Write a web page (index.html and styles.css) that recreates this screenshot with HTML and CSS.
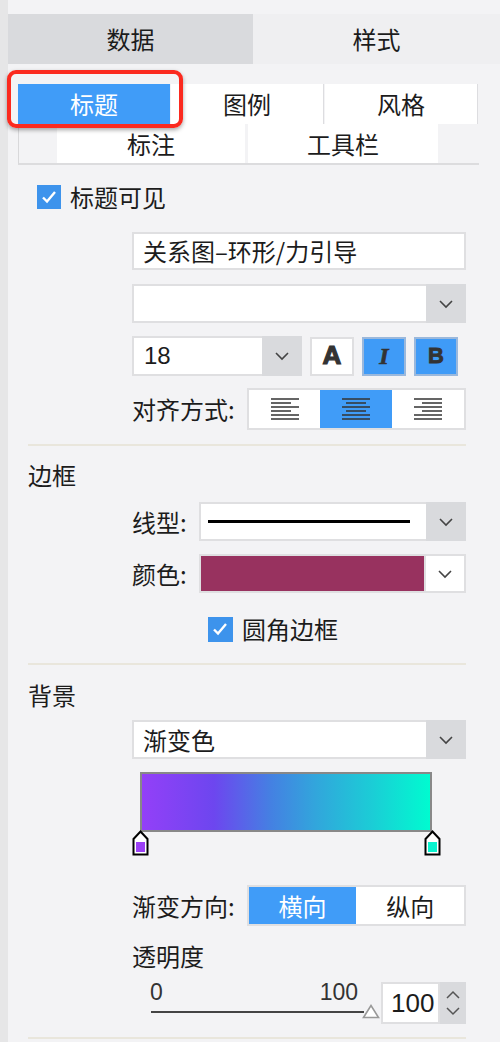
FILE: index.html
```html
<!DOCTYPE html>
<html lang="zh">
<head>
<meta charset="utf-8">
<title>样式面板</title>
<link rel="stylesheet" href="styles.css">
</head>
<body>
<div class="page">
  <div class="strip"></div>
  <div class="panel">
    <div class="main-tabs">
      <div class="mtab mtab-data">数据</div>
      <div class="mtab mtab-style">样式</div>
    </div>

    <div class="subtabs">
      <div class="subrow subrow-1">
        <div class="stab stab-sel">标题</div>
        <div class="stab">图例</div>
        <div class="stab stab-last">风格</div>
      </div>
      <div class="subrow subrow-2">
        <div class="stab">标注</div>
        <div class="stab stab-last">工具栏</div>
      </div>
      <div class="highlight"></div>
    </div>

    <div class="check-row check-title">
      <span class="checkbox"><svg viewBox="0 0 24 24" width="24" height="24"><path d="M6 12.5 L10 16.5 L18 7" fill="none" stroke="#fff" stroke-width="2.4"/></svg></span>
      <span class="check-label">标题可见</span>
    </div>

    <div class="form">
      <div class="field field-text">关系图–环形/力引导</div>
      <div class="field field-select">
        <span class="sel-value"></span>
        <span class="sel-arrow"><svg viewBox="0 0 16 10" width="16" height="10"><path d="M2 2 L8 8 L14 2" fill="none" stroke="#444" stroke-width="1.6"/></svg></span>
      </div>
      <div class="font-row">
        <div class="field field-select field-size">
          <span class="sel-value">18</span>
          <span class="sel-arrow"><svg viewBox="0 0 16 10" width="16" height="10"><path d="M2 2 L8 8 L14 2" fill="none" stroke="#444" stroke-width="1.6"/></svg></span>
        </div>
        <div class="fbtn fbtn-a">A</div>
        <div class="fbtn fbtn-on fbtn-i">I</div>
        <div class="fbtn fbtn-on fbtn-b">B</div>
      </div>
      <div class="label-row label-row-align">
        <span class="row-label">对齐方式:</span>
        <div class="seg seg-align">
          <div class="seg-item">
            <svg viewBox="0 0 28 22" width="28" height="22"><g stroke="#333" stroke-width="1.6"><path d="M0 1H28M0 5H20M0 9H28M0 13H20M0 17H28M0 21H28"/></g></svg>
          </div>
          <div class="seg-item seg-on">
            <svg viewBox="0 0 28 22" width="28" height="22"><g stroke="#333" stroke-width="1.6"><path d="M0 1H28M4 5H24M0 9H28M4 13H24M0 17H28M0 21H28"/></g></svg>
          </div>
          <div class="seg-item">
            <svg viewBox="0 0 28 22" width="28" height="22"><g stroke="#333" stroke-width="1.6"><path d="M0 1H28M8 5H28M0 9H28M8 13H28M0 17H28M0 21H28"/></g></svg>
          </div>
        </div>
      </div>
    </div>

    <div class="sep sep-1"></div>

    <div class="heading heading-border">边框</div>
    <div class="form">
      <div class="label-row label-row-line">
        <span class="row-label">线型:</span>
        <div class="field field-select field-line">
          <span class="sel-value"><span class="line-sample"></span></span>
          <span class="sel-arrow"><svg viewBox="0 0 16 10" width="16" height="10"><path d="M2 2 L8 8 L14 2" fill="none" stroke="#444" stroke-width="1.6"/></svg></span>
        </div>
      </div>
      <div class="label-row label-row-color">
        <span class="row-label">颜色:</span>
        <div class="color-pick">
          <span class="swatch"></span>
          <span class="color-arrow"><svg viewBox="0 0 16 10" width="16" height="10"><path d="M2 2 L8 8 L14 2" fill="none" stroke="#444" stroke-width="1.6"/></svg></span>
        </div>
      </div>
      <div class="check-row check-round">
        <span class="checkbox"><svg viewBox="0 0 24 24" width="24" height="24"><path d="M6 12.5 L10 16.5 L18 7" fill="none" stroke="#fff" stroke-width="2.4"/></svg></span>
        <span class="check-label">圆角边框</span>
      </div>
    </div>

    <div class="sep sep-2"></div>

    <div class="heading heading-bg">背景</div>
    <div class="form">
      <div class="field field-select field-fill">
        <span class="sel-value">渐变色</span>
        <span class="sel-arrow"><svg viewBox="0 0 16 10" width="16" height="10"><path d="M2 2 L8 8 L14 2" fill="none" stroke="#444" stroke-width="1.6"/></svg></span>
      </div>
      <div class="gradient-wrap">
        <div class="gradient"></div>
        <div class="stops">
          <span class="stop" style="left:0%"><svg viewBox="0 0 17 26" width="17" height="26"><path d="M1.5 9 L8.5 1.5 L15.5 9 V24.5 H1.5 Z" fill="#fff" stroke="#000" stroke-width="2"/><rect x="4" y="12" width="9" height="10" fill="#9b3ff6"/></svg></span>
          <span class="stop" style="left:100%"><svg viewBox="0 0 17 26" width="17" height="26"><path d="M1.5 9 L8.5 1.5 L15.5 9 V24.5 H1.5 Z" fill="#fff" stroke="#000" stroke-width="2"/><rect x="4" y="12" width="9" height="10" fill="#08f3cf"/></svg></span>
        </div>
      </div>
      <div class="label-row label-row-dir">
        <span class="row-label">渐变方向:</span>
        <div class="seg seg-dir">
          <div class="seg-item seg-on seg-text">横向</div>
          <div class="seg-item seg-text">纵向</div>
        </div>
      </div>
      <div class="opacity-label">透明度</div>
      <div class="slider-row">
        <div class="slider">
          <div class="slider-ticks"><span>0</span><span>100</span></div>
          <div class="slider-track">
            <span class="thumb"><svg viewBox="0 0 18 15" width="18" height="15"><path d="M1.5 13.5 L9 1.5 L16.5 13.5 Z" fill="#fff" stroke="#999" stroke-width="1.6"/></svg></span>
          </div>
        </div>
        <div class="num-input">
          <span class="num-value">100</span>
          <span class="spinner">
            <svg viewBox="0 0 16 10" width="16" height="10"><path d="M2 8 L8 2 L14 8" fill="none" stroke="#555" stroke-width="1.5"/></svg>
            <svg viewBox="0 0 16 10" width="16" height="10"><path d="M2 2 L8 8 L14 2" fill="none" stroke="#555" stroke-width="1.5"/></svg>
          </span>
        </div>
      </div>
    </div>
    <div class="sep sep-3"></div>
  </div>
</div>
</body>
</html>
```

FILE: styles.css
```css
* { box-sizing: border-box; }

html, body {
  margin: 0;
  padding: 0;
  background: #f3f3f5;
}

body {
  font-family: "Noto Sans CJK SC", "Noto Sans", sans-serif;
  font-size: 24px;
  color: #1c1c1c;
  width: 500px;
  height: 1042px;
  overflow: hidden;
}

.page {
  display: flex;
  height: 1042px;
}

.strip {
  width: 8px;
  background: #e6e6e7;
  flex: none;
}

.panel {
  flex: 1;
  padding-top: 14px;
}

/* main tabs */
.main-tabs {
  display: grid;
  grid-template-columns: 245px 1fr;
  height: 50px;
}

.mtab {
  display: flex;
  align-items: center;
  justify-content: center;
  line-height: 1;
}

.mtab-data { background: #d9dadd; }
.mtab-style { background: #efeff1; }

/* sub tabs */
.subtabs {
  position: relative;
  margin: 20px 0 0 10px;
  width: 461px;
}

.subrow {
  display: flex;
  height: 40px;
}

.subrow-1 { gap: 1px; }

.subrow-1 .stab { width: 153px; }
.subrow-1 .stab-sel { width: 152px; }

.subrow-2 {
  height: 41px;
  border-left: 1px solid #d8d8da;
  border-bottom: 2px solid #dcdcde;
  padding-left: 38px;
  gap: 3px;
}

.subrow-2 .stab { width: 188px; }
.subrow-2 .stab-last { width: 190px; }

.stab {
  display: flex;
  align-items: center;
  justify-content: center;
  background: #fff;
  line-height: 1;
  border-right: 1px solid #dddde0;
}

.subrow-2 .stab { border-right: none; }

.stab-sel {
  background: #409cf8;
  color: #fff;
  border-right: none;
}

.highlight {
  position: absolute;
  left: -11px;
  top: -14px;
  width: 176px;
  height: 58px;
  border: 4px solid #fb2a1f;
  border-radius: 9px;
  box-shadow: 0 2px 4px rgba(0, 0, 0, 0.35);
}

/* checkbox rows */
.check-row {
  display: flex;
  align-items: center;
  gap: 9px;
  line-height: 1;
}

.check-title {
  margin: 19px 0 0 29px;
  height: 25px;
}

.checkbox {
  width: 24px;
  height: 24px;
  background: #3d93ec;
  display: flex;
  flex: none;
}

/* forms */
.form {
  margin-left: 124px;
  width: 334px;
}

.field {
  background: #fff;
  border: 2px solid #dfdfe1;
  display: flex;
  align-items: center;
  line-height: 1;
}

.field-text {
  margin-top: 23px;
  height: 38px;
  padding-left: 9px;
}

.field-select {
  height: 39px;
  margin-top: 14px;
  padding: 0;
  border-right: none;
}

.sel-value {
  flex: 1;
  padding-left: 9px;
  display: flex;
  align-items: center;
}

.sel-arrow {
  width: 40px;
  align-self: stretch;
  margin: -2px 0;
  background: #d9dadd;
  display: flex;
  align-items: center;
  justify-content: center;
}

.font-row {
  display: flex;
  align-items: center;
  margin-top: 13px;
  height: 40px;
}

.field-size {
  width: 170px;
  height: 40px;
  margin-top: 0;
  font-family: "Liberation Sans", "Noto Sans", sans-serif;
}

.field-size .sel-value { padding-left: 10px; }

.fbtn {
  width: 44px;
  height: 39px;
  margin-left: 8px;
  border: 2px solid #dfdfe1;
  background: #fff;
  display: flex;
  align-items: flex-start;
  justify-content: center;
  color: #333;
  font-family: "Liberation Sans", sans-serif;
  font-weight: 900;
  line-height: 1;
  padding-top: 3px;
}

.fbtn-a {
  font-size: 26px;
  -webkit-text-stroke: 1.2px #333;
}

.fbtn-on {
  background: #3f9bf7;
  border-color: #9ab8dc;
  align-items: center;
  padding-top: 0;
}

.fbtn-i {
  font-family: "Liberation Serif", serif;
  font-style: italic;
  font-size: 24px;
  -webkit-text-stroke: 0.6px #333;
}

.fbtn-b {
  font-size: 22px;
  -webkit-text-stroke: 0.8px #333;
}

.label-row {
  display: flex;
  align-items: center;
  gap: 12px;
}

.row-label {
  flex: none;
  line-height: 1;
}

.label-row-align {
  margin-top: 12px;
  height: 42px;
}

.seg {
  flex: 1;
  display: flex;
  height: 100%;
  border: 2px solid #dfdfe1;
  background: #fff;
}

.seg-item {
  flex: 1;
  display: flex;
  align-items: center;
  justify-content: center;
}

.seg-on {
  background: #409cf8;
}

.seg-text {
  line-height: 1;
}

.seg-text.seg-on { color: #fff; }

/* separators */
.sep {
  height: 2px;
  background: #e9e6dc;
  margin-left: 20px;
  width: 438px;
}

.sep-1 { margin-top: 14px; }
.sep-2 { margin-top: 21px; }
.sep-3 { margin-top: 13px; }

.heading {
  margin-left: 20px;
  height: 30px;
  display: flex;
  align-items: center;
  line-height: 1;
}

.heading-border { margin-top: 14px; }
.heading-bg { margin-top: 15px; }

.label-row-line {
  margin-top: 12px;
  height: 39px;
}

.label-row-line .field-line {
  flex: 1;
  margin-top: 0;
}

.line-sample {
  display: block;
  width: 202px;
  height: 2.5px;
  background: #000;
  margin-left: -2px;
}

.label-row-color {
  margin-top: 13px;
  height: 39px;
}

.color-pick {
  flex: 1;
  height: 39px;
  display: flex;
  border: 2px solid #dfdfe1;
  background: #fff;
}

.swatch {
  flex: 1;
  background: #98325f;
}

.color-arrow {
  width: 40px;
  border-left: 2px solid #dfdfe1;
  display: flex;
  align-items: center;
  justify-content: center;
}

.check-round {
  margin: 23px 0 0 76px;
  height: 26px;
}

.check-round .checkbox { width: 25px; height: 25px; }

/* background section */
.field-fill { margin-top: 10px; }

.gradient-wrap {
  position: relative;
  margin: 13px 0 0 8px;
  width: 292px;
  height: 84px;
}

.gradient {
  height: 60px;
  border: 2px solid #888;
  background: linear-gradient(to right, #9340f8 0%, #6d46ef 25%, #4481e2 45%, #32a5dc 60%, #1bcdd6 80%, #00fbd0 100%);
}

.stops {
  position: relative;
  height: 24px;
  margin-top: -1px;
}

.stop {
  position: absolute;
  top: -1px;
  width: 17px;
  height: 26px;
  margin-left: -8px;
  display: block;
}

.stop svg { display: block; }

.label-row-dir {
  margin-top: 29px;
  height: 41px;
}

.opacity-label {
  margin-top: 15px;
  height: 30px;
  display: flex;
  align-items: center;
  line-height: 1;
}

.slider-row {
  display: flex;
  align-items: flex-end;
  margin-top: 11px;
  height: 42px;
}

.slider {
  width: 241px;
  margin-left: 18px;
  height: 42px;
  position: relative;
}

.slider-ticks {
  display: flex;
  justify-content: space-between;
  font-family: "Liberation Sans", sans-serif;
  font-size: 23px;
  color: #333;
  line-height: 1;
  width: 208px;
  margin-top: -1px;
}

.slider-track {
  position: relative;
  margin-top: 7px;
  height: 2px;
  width: 213px;
  margin-left: 1px;
  background: #444;
}

.thumb {
  position: absolute;
  right: -16px;
  top: -7px;
  display: block;
}

.thumb svg { display: block; }

.num-input {
  margin-left: -9px;
  display: flex;
  height: 42px;
}

.num-value {
  width: 59px;
  background: #fff;
  border: 2px solid #dfdfe1;
  display: flex;
  align-items: center;
  padding-left: 8px;
  overflow: hidden;
  font-family: "Liberation Sans", sans-serif;
  font-size: 26px;
  line-height: 1;
  white-space: nowrap;
}

.spinner {
  width: 26px;
  background: #d9dadd;
  display: flex;
  flex-direction: column;
  align-items: center;
  justify-content: center;
  gap: 6px;
}

.spinner svg { display: block; width: 16px; }
```
